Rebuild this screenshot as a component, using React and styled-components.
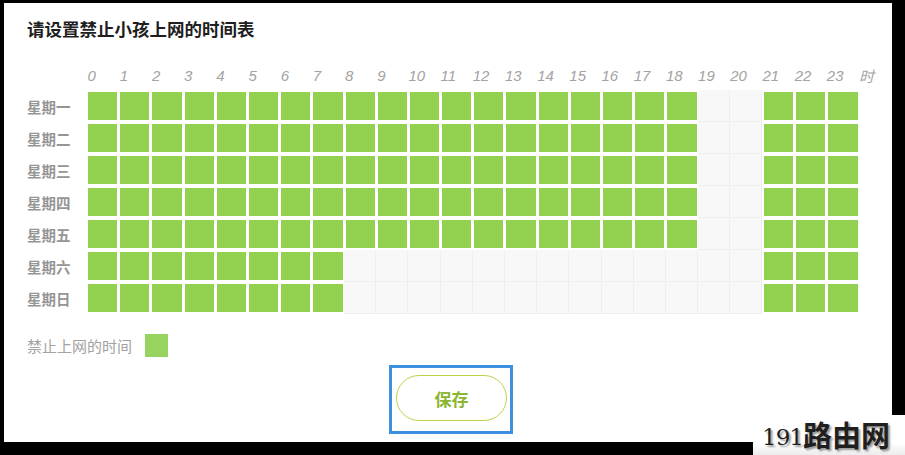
import React from 'react'
import styled, { createGlobalStyle } from 'styled-components'

const GlobalStyle = createGlobalStyle`
  html, body {
    margin: 0;
    padding: 0;
    background: #000;
  }
  body {
    font-family: "Noto Sans CJK SC", "Liberation Sans", sans-serif;
  }
`

const Frame = styled.div`
  position: relative;
  width: 905px;
  height: 455px;
  box-sizing: border-box;
  padding: 3px 13px 13px 4px;
  background: #000;
`

const Panel = styled.div`
  height: 100%;
  box-sizing: border-box;
  background: #fff;
  padding: 16px 0 0 23px;
  display: flex;
  flex-direction: column;
`

const Title = styled.h2`
  margin: 0;
  font-size: 17.5px;
  line-height: 20px;
  font-weight: 700;
  color: #1e1e1e;
`

const HourRow = styled.div`
  display: grid;
  grid-template-columns: repeat(25, 32.2px);
  margin: 28px 0 0 59.5px;
  height: 17px;
`

const Hour = styled.span`
  font-family: "Liberation Sans", Arial, sans-serif;
  font-style: italic;
  font-size: 15px;
  line-height: 17px;
  color: #a3a3a3;
  padding-left: ${p => (p.$wide ? 0 : 1)}px;
  white-space: nowrap;
`

const HourUnit = styled.span`
  font-style: italic;
  font-size: 15px;
  line-height: 17px;
  color: #a3a3a3;
`

const Schedule = styled.div`
  display: grid;
  grid-template-columns: 59.5px repeat(24, 32.2px);
  grid-auto-rows: 32px;
  margin-top: 6px;
`

const Day = styled.div`
  display: flex;
  align-items: center;
  font-size: 14.5px;
  font-weight: 700;
  color: #959595;
`

const Cell = styled.div`
  box-sizing: border-box;
  padding: 2px 1.5px;
  background: ${p => (p.$on ? '#fff' : '#f8f8f8')};
  box-shadow: ${p => (p.$on ? 'none' : 'inset -1px -1px 0 #efefef')};
`

const Fill = styled.div`
  width: 100%;
  height: 100%;
  background: #92d050;
`

const Legend = styled.div`
  display: flex;
  align-items: center;
  gap: 13px;
  margin-top: 20px;
  font-size: 15px;
  color: #a2a2a2;
`

const Swatch = styled.span`
  width: 23px;
  height: 23px;
  background: #97d35f;
`

const Actions = styled.div`
  display: flex;
  justify-content: center;
  margin: 8px 17px 0 0;
`

const FocusRing = styled.div`
  border: 3px solid #3d8fe0;
  padding: 7px 3px 10px 4px;
`

const SaveButton = styled.button`
  width: 111px;
  height: 46px;
  border: 1.5px solid #bcd24a;
  border-radius: 23px;
  background: #fff;
  font-family: "Noto Sans CJK SC", sans-serif;
  font-size: 17px;
  font-weight: 700;
  color: #8cb632;
  cursor: pointer;
`

const Watermark = styled.div`
  position: absolute;
  right: 0;
  bottom: 0;
  width: 152px;
  height: 40px;
  background: linear-gradient(#fff 70%, #ececec);
  display: flex;
  align-items: flex-end;
  padding: 0 0 6px 9px;
  box-sizing: border-box;
  color: #1f1f1f;
  text-shadow: 2px 2px 2px #9a9a9a;
`

const MarkDigits = styled.span`
  font-family: "DejaVu Serif", "Liberation Serif", serif;
  font-size: 23px;
  line-height: 24px;
  letter-spacing: -1px;
`

const MarkName = styled.span`
  font-size: 29px;
  line-height: 30px;
  font-weight: 700;
`

const DAYS = ['星期一', '星期二', '星期三', '星期四', '星期五', '星期六', '星期日']
const HOURS = Array.from({ length: 24 }, (_, i) => i)

// blocked hours per day: weekdays 0–18 and 21–23, weekend 0–7 and 21–23
const isBlocked = (day, hour) => {
  if (hour >= 21) return true
  return day < 5 ? hour <= 18 : hour <= 7
}

export default function App() {
  return (
    <>
      <GlobalStyle />
      <Frame>
        <Panel>
          <Title>请设置禁止小孩上网的时间表</Title>
          <HourRow>
            {HOURS.map(h => (
              <Hour key={h} $wide={h >= 10}>{h}</Hour>
            ))}
            <HourUnit>时</HourUnit>
          </HourRow>
          <Schedule>
            {DAYS.map((day, d) => (
              <React.Fragment key={day}>
                <Day>{day}</Day>
                {HOURS.map(h => {
                  const on = isBlocked(d, h)
                  return (
                    <Cell key={h} $on={on}>
                      {on && <Fill />}
                    </Cell>
                  )
                })}
              </React.Fragment>
            ))}
          </Schedule>
          <Legend>
            禁止上网的时间
            <Swatch />
          </Legend>
          <Actions>
            <FocusRing>
              <SaveButton>保存</SaveButton>
            </FocusRing>
          </Actions>
        </Panel>
        <Watermark>
          <MarkDigits>191</MarkDigits>
          <MarkName>路由网</MarkName>
        </Watermark>
      </Frame>
    </>
  )
}
